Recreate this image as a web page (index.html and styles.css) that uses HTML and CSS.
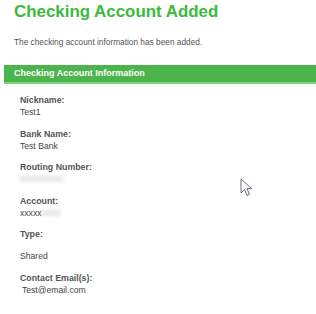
FILE: index.html
```html
<!DOCTYPE html>
<html>
<head>
<meta charset="utf-8">
<link rel="stylesheet" href="styles.css">
</head>
<body>
<div class="page">
  <h1 class="title">Checking Account Added</h1>
  <p class="intro">The checking account information has been added.</p>
  <div class="bar">Checking Account Information</div>
  <div class="fields">
    <div class="field">
      <div class="label">Nickname:</div>
      <div class="value">Test1</div>
    </div>
    <div class="field">
      <div class="label">Bank Name:</div>
      <div class="value">Test Bank</div>
    </div>
    <div class="field">
      <div class="label">Routing Number:</div>
      <div class="value"><span class="blur">000000000</span></div>
    </div>
    <div class="field">
      <div class="label">Account:</div>
      <div class="value">xxxxx<span class="blur">0000</span></div>
    </div>
    <div class="field">
      <div class="label">Type:</div>
      <div class="value spaced">Shared</div>
    </div>
    <div class="field">
      <div class="label">Contact Email(s):</div>
      <div class="value indent">Test@email.com</div>
    </div>
  </div>
</div>
<svg class="cursor" width="13" height="19" viewBox="0 0 13 19">
  <path d="M1 1 L1 15 L4.5 11.5 L7 17.5 L9.5 16.5 L7 10.5 L11.5 10.5 Z" fill="#fff" stroke="#6a6a7a" stroke-width="1" stroke-linejoin="round"/>
</svg>
</body>
</html>
```
FILE: styles.css
```css
html, body {
  margin: 0;
  padding: 0;
  background: #fff;
}
body {
  font-family: "Liberation Sans", Arial, sans-serif;
  position: relative;
  width: 316px;
  height: 314px;
  overflow: hidden;
}
.page {
  padding: 0 0 0 4px;
}
.title {
  margin: 0 0 0 10px;
  font-size: 16.9px;
  font-weight: bold;
  color: #3cba3c;
  line-height: 24px;
}
.intro {
  margin: 13px 0 0 10px;
  font-size: 8.3px;
  color: #555;
  line-height: 11px;
}
.bar {
  margin-top: 17px;
  background: #4cb44c;
  border-bottom: 2px solid #7fd07f;
  color: #fff;
  font-weight: bold;
  font-size: 9px;
  line-height: 17px;
  padding-left: 10px;
}
.fields {
  padding: 10px 0 0 16px;
  display: flex;
  flex-direction: column;
  gap: 9.5px;
}
.label {
  font-size: 8.8px;
  font-weight: bold;
  color: #555;
  line-height: 12px;
}
.value {
  font-size: 8.6px;
  color: #444;
  line-height: 12px;
}
.value.spaced {
  margin-top: 10px;
}
.value.indent {
  padding-left: 2px;
}
.blur {
  color: #c4c4c4;
  filter: blur(1.4px);
}
.cursor {
  position: absolute;
  left: 240px;
  top: 178px;
}
```
